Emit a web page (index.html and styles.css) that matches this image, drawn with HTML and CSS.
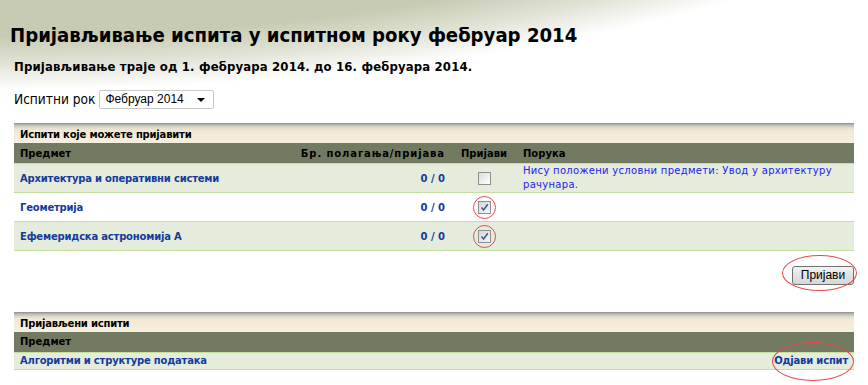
FILE: index.html
```html
<!DOCTYPE html>
<html lang="sr">
<head>
<meta charset="utf-8">
<title>Пријављивање испита</title>
<link rel="stylesheet" href="styles.css">
</head>
<body>
<div class="page">
  <h1 class="title">Пријављивање испита у испитном року фебруар 2014</h1>
  <p class="subtitle">Пријављивање траје од 1. фебруара 2014. до 16. фебруара 2014.</p>
  <div class="term">
    <span class="term-label">Испитни рок</span>
    <span class="select"><span class="select-text">Фебруар 2014</span><span class="select-arrow"></span></span>
  </div>

  <div class="panel">
    <div class="panel-caption">Испити које можете пријавити</div>
    <table class="grid">
      <colgroup>
        <col class="c-subject"><col class="c-count"><col class="c-check"><col class="c-msg">
      </colgroup>
      <thead>
        <tr><th class="left">Предмет</th><th class="right wide">Бр. полагања/пријава</th><th class="center">Пријави</th><th class="left">Порука</th></tr>
      </thead>
      <tbody>
        <tr class="alt">
          <td><a class="link" href="#">Архитектура и оперативни системи</a></td>
          <td class="right count">0 / 0</td>
          <td class="center"><span class="cb"></span></td>
          <td class="msg">Нису положени условни предмети: Увод у архитектуру рачунара.</td>
        </tr>
        <tr>
          <td><a class="link" href="#">Геометрија</a></td>
          <td class="right count">0 / 0</td>
          <td class="center"><span class="mark"><span class="cb checked"><svg viewBox="0 0 11 11" width="11" height="11"><path d="M2.5 5.5 L4.6 8 L8.8 2.2" fill="none" stroke="#4b5a8c" stroke-width="1.6"/></svg></span><span class="ring ring-small"></span></span></td>
          <td></td>
        </tr>
        <tr class="alt">
          <td><a class="link" href="#">Ефемеридска астрономија А</a></td>
          <td class="right count">0 / 0</td>
          <td class="center"><span class="mark"><span class="cb checked"><svg viewBox="0 0 11 11" width="11" height="11"><path d="M2.5 5.5 L4.6 8 L8.8 2.2" fill="none" stroke="#4b5a8c" stroke-width="1.6"/></svg></span><span class="ring ring-small"></span></span></td>
          <td></td>
        </tr>
      </tbody>
    </table>
  </div>

  <div class="actions">
    <span class="mark"><button class="btn" type="button">Пријави</button><span class="ring ring-btn"></span></span>
  </div>

  <div class="panel second">
    <div class="panel-caption">Пријављени испити</div>
    <table class="grid">
      <thead>
        <tr><th class="left" colspan="2">Предмет</th></tr>
      </thead>
      <tbody>
        <tr class="alt short">
          <td><a class="link" href="#">Алгоритми и структуре података</a></td>
          <td class="right"><span class="mark"><a class="link" href="#">Одјави испит</a><span class="ring ring-link"></span></span></td>
        </tr>
      </tbody>
    </table>
  </div>
</div>
</body>
</html>
```

FILE: styles.css
```css
html, body {
  margin: 0;
  padding: 0;
}
body {
  width: 868px;
  height: 385px;
  overflow: hidden;
  background:
    radial-gradient(ellipse 1030px 300px at 0px -210px, #c8cbb3 0%, #c8cbb3 82%, rgba(200,203,179,0.55) 91%, rgba(255,255,255,0) 100%),
    #ffffff;
  font-family: "DejaVu Sans", Verdana, sans-serif;
  color: #000;
}
.page {
  padding: 0 14px 0 14px;
}
.title {
  margin: 0;
  padding-top: 23px;
  margin-left: -4px;
  font-family: "DejaVu Sans Condensed", "DejaVu Sans", sans-serif;
  font-weight: bold;
  font-size: 20.15px;
  line-height: 24px;
  letter-spacing: 0;
}
.subtitle {
  margin: 12px 0 0 0;
  font-family: "DejaVu Sans Condensed", "DejaVu Sans", sans-serif;
  font-weight: bold;
  font-size: 13px;
  line-height: 16px;
  letter-spacing: 0.15px;
}
.term {
  display: flex;
  align-items: center;
  gap: 4px;
  margin-top: 14px;
  height: 20px;
}
.term-label {
  font-family: "DejaVu Sans Condensed", "DejaVu Sans", sans-serif;
  font-size: 13.6px;
}
.select {
  display: flex;
  align-items: center;
  justify-content: space-between;
  width: 115px;
  height: 19px;
  box-sizing: border-box;
  border: 1px solid #c9c9c9;
  border-radius: 2px;
  background: #fff;
  padding: 0 8px 0 5px;
  font-family: "Liberation Sans", Arial, sans-serif;
  font-size: 12px;
}
.select-arrow {
  width: 0;
  height: 0;
  border-left: 4px solid transparent;
  border-right: 4px solid transparent;
  border-top: 4px solid #000;
  margin-top: 2px;
}
.panel {
  margin-top: 14px;
  width: 840px;
}
.panel.second {
  margin-top: 27px;
}
.panel-caption {
  height: 20px;
  box-sizing: border-box;
  padding: 5px 6px 0 6px;
  background: linear-gradient(#8c8c8c 0px, #bdbbb6 2px, #e4ded0 5px, #f2e9d4 8px, #f6efe0 20px);
  font-size: 10px;
  font-weight: bold;
  line-height: 14px;
  letter-spacing: -0.2px;
}
.grid {
  width: 840px;
  border-collapse: collapse;
  table-layout: fixed;
  font-size: 10px;
}
.c-subject { width: 277px; }
.c-count { width: 160px; }
.c-check { width: 66px; }
.c-msg { width: 337px; }
.grid th {
  background: #727a62;
  height: 20px;
  padding: 0 6px;
  font-weight: bold;
  color: #000;
  border-bottom: 1px solid #c3df9f;
}
.grid th.wide {
  letter-spacing: 0.9px;
}
.grid td {
  height: 28px;
  padding: 0 6px;
  border-bottom: 1px solid #c3df9f;
  vertical-align: middle;
}
.grid tr.short td {
  height: 16px;
}
.grid tr.alt td {
  background: #e5ecdb;
}
.left { text-align: left; }
.right { text-align: right; }
.center { text-align: center; }
.link {
  color: #133b9b;
  font-weight: bold;
  text-decoration: none;
  letter-spacing: -0.2px;
}
.count {
  color: #133b9b;
  font-weight: bold;
}
.msg {
  color: #2323f0;
  line-height: 14px;
  letter-spacing: 0.3px;
}
.cb {
  display: inline-flex;
  align-items: center;
  justify-content: center;
  width: 13px;
  height: 13px;
  box-sizing: border-box;
  border: 1px solid #8f8f8f;
  background: linear-gradient(135deg, #dcdcdc, #ffffff);
  vertical-align: middle;
}
.cb.checked {
  background: linear-gradient(135deg, #d6d6dc, #f6f6f6);
}
.cb svg {
  display: block;
}
.mark {
  position: relative;
  display: inline-block;
  vertical-align: middle;
}
.ring {
  position: absolute;
  border: 1px solid #e84a4a;
  border-radius: 50%;
  pointer-events: none;
}
.ring-small {
  left: -5px;
  top: -5px;
  width: 21px;
  height: 21px;
}
.actions {
  display: flex;
  justify-content: flex-end;
  padding-top: 13px;
  width: 840px;
}
.btn {
  width: 62px;
  height: 19px;
  margin-right: 0;
  border: 1px solid #707070;
  border-radius: 3px;
  background: linear-gradient(#f4f4f4, #e2e2e2 50%, #d6d6d6);
  font-family: "Liberation Sans", Arial, sans-serif;
  font-size: 12px;
  padding: 0;
  color: #000;
}
.ring-btn {
  left: -10px;
  top: -9px;
  width: 73px;
  height: 34px;
}
.ring-link {
  left: -2px;
  top: -13px;
  width: 80px;
  height: 37px;
}
```
